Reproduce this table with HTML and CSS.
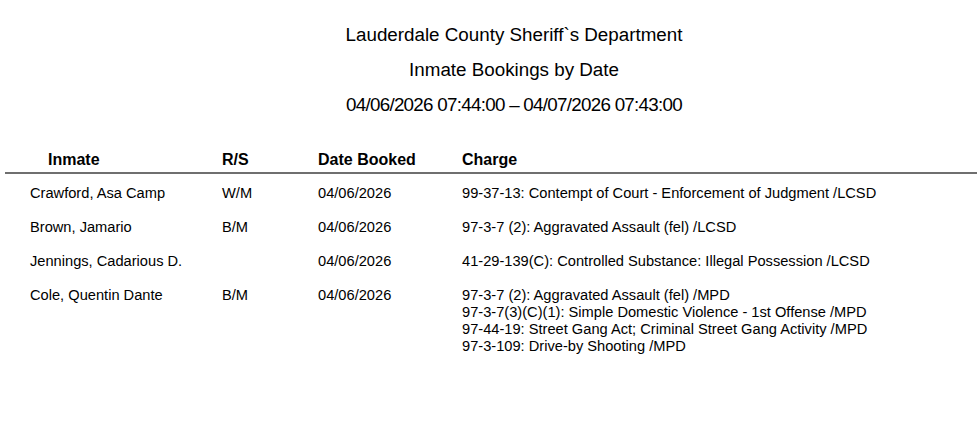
FILE: index.html
```html
<!DOCTYPE html>
<html>
<head>
<meta charset="utf-8">
<link rel="stylesheet" href="styles.css">
</head>
<body>
<div class="page">
  <header class="report-head">
    <div class="title">Lauderdale County Sheriff`s Department</div>
    <div class="subtitle">Inmate Bookings by Date</div>
    <div class="range">04/06/2026 07:44:00 – 04/07/2026 07:43:00</div>
  </header>
  <div class="table">
    <div class="row head">
      <div class="c-name head-name">Inmate</div>
      <div class="c-rs">R/S</div>
      <div class="c-date">Date Booked</div>
      <div class="c-charge">Charge</div>
    </div>
    <div class="rows">
      <div class="row">
        <div class="c-name">Crawford, Asa Camp</div>
        <div class="c-rs">W/M</div>
        <div class="c-date">04/06/2026</div>
        <div class="c-charge">99-37-13: Contempt of Court - Enforcement of Judgment /LCSD</div>
      </div>
      <div class="row">
        <div class="c-name">Brown, Jamario</div>
        <div class="c-rs">B/M</div>
        <div class="c-date">04/06/2026</div>
        <div class="c-charge">97-3-7 (2): Aggravated Assault (fel) /LCSD</div>
      </div>
      <div class="row">
        <div class="c-name">Jennings, Cadarious D.</div>
        <div class="c-rs"></div>
        <div class="c-date">04/06/2026</div>
        <div class="c-charge">41-29-139(C): Controlled Substance: Illegal Possession /LCSD</div>
      </div>
      <div class="row">
        <div class="c-name">Cole, Quentin Dante</div>
        <div class="c-rs">B/M</div>
        <div class="c-date">04/06/2026</div>
        <div class="c-charge">
          <div>97-3-7 (2): Aggravated Assault (fel) /MPD</div>
          <div>97-3-7(3)(C)(1): Simple Domestic Violence - 1st Offense /MPD</div>
          <div>97-44-19: Street Gang Act; Criminal Street Gang Activity /MPD</div>
          <div>97-3-109: Drive-by Shooting /MPD</div>
        </div>
      </div>
    </div>
  </div>
</div>
</body>
</html>
```

FILE: styles.css
```css
html, body {
  margin: 0;
  padding: 0;
  background: #ffffff;
}
body {
  font-family: "Liberation Sans", Arial, sans-serif;
  color: #000;
  overflow: hidden;
}
.page {
  width: 977px;
}
.report-head {
  display: flex;
  flex-direction: column;
  align-items: center;
  padding-top: 24px;
  padding-left: 51px;
}
.title {
  font-size: 18.8px;
  line-height: 22px;
  white-space: nowrap;
}
.subtitle {
  font-size: 18.8px;
  line-height: 22px;
  margin-top: 13px;
  white-space: nowrap;
}
.range {
  font-size: 18.8px;
  line-height: 22px;
  margin-top: 13px;
  letter-spacing: -0.72px;
  white-space: nowrap;
}
.table {
  margin-top: 35px;
}
.row {
  display: flex;
  font-size: 14.65px;
  line-height: 17px;
}
.row.head {
  font-weight: bold;
  font-size: 16px;
  line-height: 18px;
  margin-left: 5px;
  padding-bottom: 3px;
  border-bottom: 2px solid #6f6f6f;
}
.head .c-name { padding-left: 43px; width: 174px; }
.head .c-rs { width: 96px; }
.head .c-date { width: 144px; }
.rows {
  padding-top: 11px;
}
.rows .row {
  margin-bottom: 17px;
}
.c-name { width: 192px; padding-left: 30px; white-space: nowrap; }
.c-rs { width: 96px; }
.c-date { width: 144px; }
.c-charge { flex: 1; white-space: nowrap; }
```
